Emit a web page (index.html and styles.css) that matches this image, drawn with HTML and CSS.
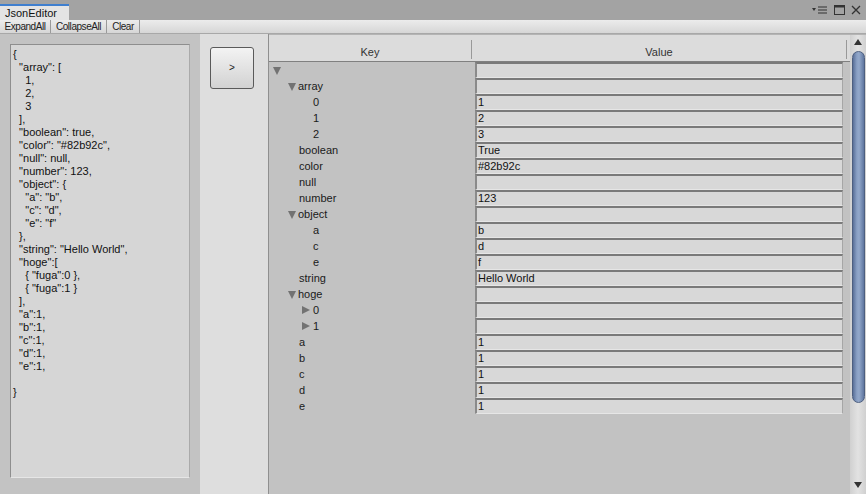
FILE: index.html
```html
<!DOCTYPE html>
<html>
<head>
<meta charset="utf-8">
<link rel="stylesheet" href="styles.css">
</head>
<body>
<div class="window">
  <div class="titlebar">
    <div class="tab">JsonEditor</div>
    <div class="winicons">
      <svg width="16" height="10" viewBox="0 0 16 10"><path d="M0 3h4l-2 3z" fill="#333"/><path d="M6 2h9M6 5h9M6 8h9" stroke="#333" stroke-width="1.2"/></svg>
      <svg width="11" height="10" viewBox="0 0 11 10"><rect x="0.5" y="0.5" width="10" height="9" fill="none" stroke="#333"/><rect x="0.5" y="0.5" width="10" height="2" fill="#333"/></svg>
      <svg width="10" height="10" viewBox="0 0 10 10"><path d="M1 1L9 9M9 1L1 9" stroke="#333" stroke-width="1.3"/></svg>
    </div>
  </div>
  <div class="toolbar">
    <div class="tbtn w1">ExpandAll</div>
    <div class="tbtn w2">CollapseAll</div>
    <div class="tbtn w3">Clear</div>
  </div>
  <div class="main">
    <div class="left">
      <div class="textarea"><pre class="json">{
  "array": [
    1,
    2,
    3
  ],
  "boolean": true,
  "color": "#82b92c",
  "null": null,
  "number": 123,
  "object": {
    "a": "b",
    "c": "d",
    "e": "f"
  },
  "string": "Hello World",
  "hoge":[
    { "fuga":0 },
    { "fuga":1 }
  ],
  "a":1,
  "b":1,
  "c":1,
  "d":1,
  "e":1,

}</pre></div>
    </div>
    <div class="mid">
      <div class="convert">&gt;</div>
    </div>
    <div class="treepane">
      <div class="treewrap">
        <div class="header">
          <div class="hcol hkey">Key</div>
          <div class="hdiv"></div>
          <div class="hcol hval">Value</div>
          <div class="hdiv"></div>
        </div>
        <div class="rows">
          <div class="row"><div class="key d0"><span class="tri down"></span></div><div class="val"></div></div>
          <div class="row"><div class="key d1"><span class="tri down"></span>array</div><div class="val"></div></div>
          <div class="row"><div class="key d2">0</div><div class="val">1</div></div>
          <div class="row"><div class="key d2">1</div><div class="val">2</div></div>
          <div class="row"><div class="key d2">2</div><div class="val">3</div></div>
          <div class="row"><div class="key d1">boolean</div><div class="val">True</div></div>
          <div class="row"><div class="key d1">color</div><div class="val">#82b92c</div></div>
          <div class="row"><div class="key d1">null</div><div class="val"></div></div>
          <div class="row"><div class="key d1">number</div><div class="val">123</div></div>
          <div class="row"><div class="key d1"><span class="tri down"></span>object</div><div class="val"></div></div>
          <div class="row"><div class="key d2">a</div><div class="val">b</div></div>
          <div class="row"><div class="key d2">c</div><div class="val">d</div></div>
          <div class="row"><div class="key d2">e</div><div class="val">f</div></div>
          <div class="row"><div class="key d1">string</div><div class="val">Hello World</div></div>
          <div class="row"><div class="key d1"><span class="tri down"></span>hoge</div><div class="val"></div></div>
          <div class="row"><div class="key d2"><span class="tri right"></span>0</div><div class="val"></div></div>
          <div class="row"><div class="key d2"><span class="tri right"></span>1</div><div class="val"></div></div>
          <div class="row"><div class="key d1">a</div><div class="val">1</div></div>
          <div class="row"><div class="key d1">b</div><div class="val">1</div></div>
          <div class="row"><div class="key d1">c</div><div class="val">1</div></div>
          <div class="row"><div class="key d1">d</div><div class="val">1</div></div>
          <div class="row"><div class="key d1">e</div><div class="val">1</div></div>
        </div>
      </div>
      <div class="scrollbar">
        <div class="sarrow up"></div>
        <div class="strack">
          <div class="thumb"></div>
          <div class="trest"></div>
        </div>
        <div class="sarrow dn"></div>
      </div>
    </div>
  </div>
</div>
</body>
</html>
```

FILE: styles.css
```css
* { box-sizing: border-box; }
html, body { margin: 0; padding: 0; }
body {
  width: 866px;
  height: 494px;
  overflow: hidden;
  font-family: "Liberation Sans", Arial, sans-serif;
  font-size: 11px;
  color: #111;
  background: #c2c2c2;
}
.window { display: flex; flex-direction: column; height: 494px; }

.titlebar {
  height: 20px;
  background: #a3a3a3;
  display: flex;
  align-items: flex-end;
  flex: none;
}
.tab {
  width: 69px;
  height: 16px;
  background: #e4e4e4;
  border-top: 2px solid #3f7fcf;
  padding-left: 5px;
  font-size: 11px;
  line-height: 14px;
  color: #111;
}
.winicons {
  margin-left: auto;
  align-self: center;
  display: flex;
  align-items: center;
  gap: 6px;
  padding-right: 5px;
}

.toolbar {
  height: 14px;
  flex: none;
  display: flex;
  background: linear-gradient(#ececec, #d6d6d6);
  border-bottom: 1px solid #a8a8a8;
}
.tbtn {
  border-right: 1px solid #9a9a9a;
  font-size: 10px;
  letter-spacing: -0.45px;
  line-height: 13px;
  text-align: center;
  color: #222;
}
.w1 { width: 51px; }
.w2 { width: 56px; }
.w3 { width: 33px; }

.main { flex: 1; display: flex; min-height: 0; }

.left {
  width: 200px;
  flex: none;
  background: #c3c3c3;
  padding: 10px 10px 16px 10px;
}
.textarea {
  height: 100%;
  background: #d6d6d6;
  border: 1px solid #8e8e8e;
  border-right-color: #aaa;
  border-bottom-color: #e6e6e6;
  padding: 3px 0 0 2px;
}
.json {
  margin: 0;
  font-family: "Liberation Sans", Arial, sans-serif;
  font-size: 11px;
  line-height: 13px;
  color: #111;
}

.mid {
  width: 68px;
  flex: none;
  background: #dedede;
  padding: 13px 0 0 10px;
}
.convert {
  width: 44px;
  height: 42px;
  border: 1px solid #5a5a5a;
  border-radius: 3px;
  background: linear-gradient(#f3f3f3, #d2d2d2);
  text-align: center;
  line-height: 40px;
  font-size: 10px;
  color: #222;
}

.treepane {
  flex: 1;
  display: flex;
  border-left: 1px solid #8f8f8f;
  background: #c2c2c2;
}
.treewrap { flex: 1; display: flex; flex-direction: column; }
.header {
  height: 28px;
  flex: none;
  display: flex;
  align-items: center;
  background: #dcdcdc;
  border-top: 1px solid #b4b4b4;
  border-bottom: 1px solid #808080;
}
.hcol { text-align: center; color: #333; padding-top: 8px; }
.hkey { width: 202px; }
.hval { width: 374px; }
.hdiv { width: 1px; height: 19px; background: #999; margin-top: 2px; }

.rows { flex: 1; }
.row { display: flex; height: 16px; }
.key {
  width: 206px;
  line-height: 16px;
  white-space: nowrap;
  display: flex;
  align-items: center;
  color: #1a1a1a;
}
.d0 { padding-left: 4px; }
.d1 { padding-left: 30px; }
.d2 { padding-left: 44px; }
.tri { display: inline-block; width: 0; height: 0; margin-left: -11px; margin-right: 2px; }
.d0 .tri { margin-left: 0; }
.tri.down {
  border-left: 4.5px solid transparent;
  border-right: 4.5px solid transparent;
  border-top: 8px solid #727272;
  margin-top: 1px;
}
.tri.right {
  border-top: 4.5px solid transparent;
  border-bottom: 4.5px solid transparent;
  border-left: 8px solid #727272;
  margin-right: 3px;
}
.val {
  width: 368px;
  height: 16px;
  background: #d8d8d8;
  border-top: 2px solid #7a7a7a;
  border-left: 2px solid #8a8a8a;
  border-right: 1px solid #a6a6a6;
  border-bottom: 1px solid #e6e6e6;
  padding-left: 1px;
  line-height: 13px;
  color: #111;
}

.scrollbar {
  width: 16px;
  flex: none;
  display: flex;
  flex-direction: column;
  background: linear-gradient(90deg, #d0d0d0, #e2e2e2 50%, #d0d0d0);
  border-top: 1px solid #b4b4b4;
}
.sarrow { height: 14px; flex: none; display: flex; justify-content: center; align-items: center; }
.sarrow.up::after {
  content: "";
  border-left: 4px solid transparent;
  border-right: 4px solid transparent;
  border-bottom: 6px solid #333;
}
.sarrow.dn { height: 18px; }
.sarrow.dn::after {
  content: "";
  border-left: 4px solid transparent;
  border-right: 4px solid transparent;
  border-top: 6px solid #333;
}
.strack { flex: 1; display: flex; flex-direction: column; padding: 2px 1px 2px 2px; }
.thumb {
  height: 352px;
  border: 1px solid #4d5f80;
  border-radius: 7px;
  background: linear-gradient(90deg, #5a7099, #8aa0c4 35%, #93a8ca 55%, #5f769f);
}
.trest {
  flex: 1;
  margin-top: -6px;
  border: 1px solid #a9a9a9;
  border-top: none;
  border-radius: 0 0 7px 7px;
  background: linear-gradient(90deg, #e9e9e9, #f8f8f8 50%, #e2e2e2);
  position: relative;
  z-index: -1;
}
```
